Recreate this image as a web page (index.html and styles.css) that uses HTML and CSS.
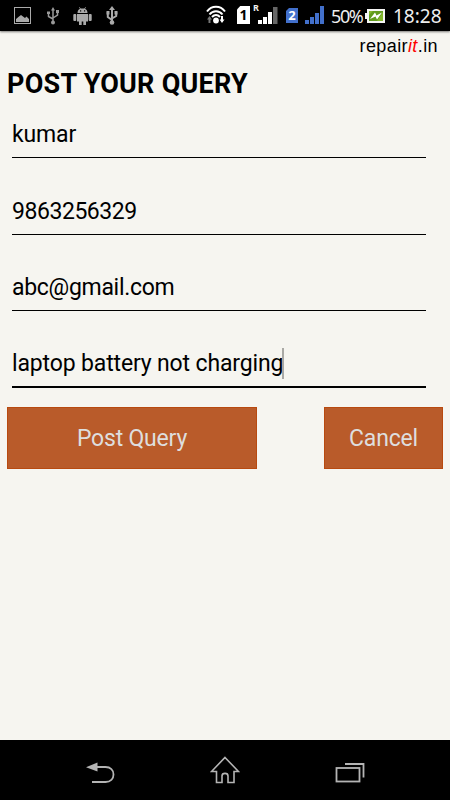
FILE: index.html
```html
<!DOCTYPE html>
<html lang="en">
  <head>
    <meta charset="UTF-8" />
    <meta name="viewport" content="width=device-width, initial-scale=1.0" />
    <title>Post Your Query</title>
    <link rel="stylesheet" href="styles.css">
  </head>
  <body>
    <div class="status-bar">
      <div class="status-left">
        <svg class="icon-image" width="18" height="18" viewBox="0 0 18 18">
          <rect x="0.5" y="0.5" width="16" height="16" fill="none" stroke="#aaa" />
          <path d="M2 15V12L5 9.5L7 8L9 9.5L11 11L12.5 9.5L15 12V15Z" fill="#aaa" />
        </svg>
        <svg class="icon-usb" width="12" height="18" viewBox="0 0 12 18">
          <path d="M6 2V16M6 12L1.5 9.5V5M6 11L10.5 8V4" fill="none" stroke="#999" stroke-width="1.5" />
          <path d="M6 0L8 3.5H4ZM0 4.5H3V7H0ZM9 3H12V6H9Z" fill="#999" />
          <circle cx="6" cy="15.5" r="2" fill="#999" />
        </svg>
        <svg class="icon-android" width="19" height="18" viewBox="0 0 19 18">
          <path d="M4.5 6C4.5 3.5 6 2 7 1.7L6 0.3L6.5 0L7.6 1.4H11.4L12.5 0L13 0.3L12 1.7C13.5 2.5 14.5 3.8 14.5 6Z" fill="#aaa" />
          <path d="M4 7H15V14.5H13V18H10.3V14.5H8.7V18H6V14.5H4Z" fill="#aaa" />
          <rect x="0.3" y="7" width="3" height="7" rx="1" fill="#aaa" />
          <rect x="15.7" y="7" width="3" height="7" rx="1" fill="#aaa" />
          <rect x="7" y="3.3" width="1.2" height="1.2" />
          <rect x="11" y="3.3" width="1.2" height="1.2" />
        </svg>
        <svg class="icon-usb-bold" width="12" height="19" viewBox="0 0 12 19">
          <path d="M6 2V17M6 14L1.8 11V6M6 12.5L10.2 10V6" fill="none" stroke="#aaa" stroke-width="2" />
          <path d="M6 0L9 4H3ZM0.5 5H3.5V8.5H0.5ZM8.5 5H11.5V8.5H8.5Z" fill="#aaa" />
          <circle cx="6" cy="16.5" r="2.3" fill="#aaa" />
        </svg>
      </div>
      <div class="status-right">
        <svg class="icon-wifi" width="20" height="20" viewBox="0 0 20 20">
          <path d="M1 6.5C5.5 0 14.5 0 19 6.5M3.5 9.5C7 5 13 5 16.5 9.5M6 12C8.5 9.3 11.5 9.3 14 12" fill="none" stroke="#fff" stroke-width="2" />
          <circle cx="10" cy="15.5" r="2.9" fill="#fff" />
          <path d="M3.5 11L6 14.5H4.5V18H2.5V14.5H1Z" fill="#777" />
          <path d="M16 18L13.5 14.5H15V11H17V14.5H18.5Z" fill="#fff" />
        </svg>
        <span class="sim">1</span>
        <span class="roaming">R</span>
        <svg class="icon-signal" width="20" height="17" viewBox="0 0 20 17">
          <path d="M0 13H4V17H0ZM5 10H9V17H5ZM10 5H14V17H10Z" fill="#fff" />
          <path d="M15 0H19.5V17H15Z" fill="#666" />
        </svg>
        <span class="sim sim-blue">2</span>
        <svg class="icon-signal-blue" width="20" height="18" viewBox="0 0 20 18">
          <path d="M0 14H4V18H0ZM5 11H9V18H5ZM10 7H14V18H10ZM15 0H19V18H15Z" fill="#4270cc" />
        </svg>
        <span class="percent">50%</span>
        <svg class="icon-battery" width="20" height="14" viewBox="0 0 20 14">
          <path d="M2 0H20V14H2V10H0V4H2Z" fill="#f5f5f5" />
          <rect x="4" y="2" width="14" height="10" fill="#83b72b" />
          <path d="M4 12V6L8 2H18V3L12 12Z" fill="#619b1d" />
          <path d="M5 10L10 3.5L11.5 6.5L17 3.5L12 10.5L10.5 7.5Z" fill="#fff" />
        </svg>
        <span class="clock">18:28</span>
      </div>
    </div>

    <div class="content">
      <div class="logo">repair<span class="logo-it">it</span>.in</div>
      <h1>POST YOUR QUERY</h1>
      <form class="query-form">
        <div class="field"><input type="text" value="kumar" /></div>
        <div class="field"><input type="tel" value="9863256329" /></div>
        <div class="field"><input type="email" value="abc@gmail.com" /></div>
        <div class="field active">
          <input type="text" value="laptop battery not charging" />
          <span class="caret"></span>
        </div>
        <div class="buttons">
          <button type="button" class="btn btn-post">Post Query</button>
          <button type="button" class="btn btn-cancel">Cancel</button>
        </div>
      </form>
    </div>

    <div class="nav-bar">
      <svg width="30" height="24" viewBox="0 0 30 24">
        <path d="M10 6H20.5C25.5 6 28.5 9 28.5 13.5S25.5 21 20.5 21H7" fill="none" stroke="#b4b4b4" stroke-width="1.8" />
        <path d="M1 6.2L12.5 1.5V10.5Z" fill="#b4b4b4" />
      </svg>
      <svg class="icon-home" width="30" height="28" viewBox="0 0 30 28">
        <path d="M15 1.5L28.5 15.5H24V26.5H18V20C18 16.5 12 16.5 12 20V26.5H6.5V15.5H1.5Z" fill="none" stroke="#b4b4b4" stroke-width="1.6" />
      </svg>
      <svg class="icon-recent" width="30" height="22" viewBox="0 0 30 22">
        <rect x="1.5" y="6" width="23" height="13.5" fill="none" stroke="#b4b4b4" stroke-width="1.8" />
        <path d="M10 2H28.5V15.5" fill="none" stroke="#b4b4b4" stroke-width="1.8" />
      </svg>
    </div>
  </body>
</html>
```
FILE: styles.css
```css
* {
  box-sizing: border-box;
}
body {
  margin: 0;
  height: 800px;
  display: flex;
  flex-direction: column;
  background: #f6f5f0;
  color: #000;
  font-family: Roboto, sans-serif;
}
.status-bar {
  display: flex;
  justify-content: space-between;
  height: 31px;
  background: #000;
  box-shadow: 0 1px 2px rgba(0, 0, 0, 0.5);
  color: #eee;
  font-family: "Noto Sans", sans-serif;
}
.status-left,
.status-right {
  display: flex;
  align-items: flex-start;
}
.status-left {
  padding-left: 14px;
}
.status-right {
  padding-right: 7px;
}
.icon-image,
.icon-usb,
.icon-android {
  margin-top: 7px;
}
.icon-usb {
  margin-left: 15px;
}
.icon-android {
  margin-left: 14px;
}
.icon-usb-bold {
  margin: 6px 0 0 14px;
}
.icon-wifi {
  margin: 5px 11px 0 0;
}
.sim {
  width: 13px;
  height: 18px;
  margin: 6px 3px 0 0;
  background: #fff;
  clip-path: polygon(25% 0, 100% 0, 100% 100%, 0 100%, 0 20%);
  color: #000;
  font-size: 14px;
  font-weight: bold;
  line-height: 18px;
  text-align: center;
}
.sim-blue {
  width: 12px;
  height: 15px;
  margin: 8px 7px 0 0;
  background: #4270cc;
  color: #fff;
  font-size: 13px;
  line-height: 15px;
}
.roaming {
  width: 5px;
  margin-top: 1px;
  font-size: 9px;
  font-weight: bold;
  line-height: 13px;
}
.icon-signal {
  margin: 7px 8px 0 0;
}
.icon-signal-blue {
  margin: 6px 6px 0 0;
}
.percent {
  width: 34px;
  font-size: 18px;
  letter-spacing: -1.4px;
  line-height: 33px;
}
.icon-battery {
  margin: 9px 8px 0 0;
}
.clock {
  width: 50px;
  font-size: 19px;
  line-height: 32px;
}
.content {
  flex: 1;
}
.logo {
  height: 31px;
  padding: 5px 12px 0 0;
  font-family: "Liberation Sans", Arial, sans-serif;
  font-size: 18px;
  letter-spacing: 0.4px;
  line-height: 21px;
  text-align: right;
}
.logo-it {
  color: #f00;
  font-style: italic;
}
h1 {
  margin: 0;
  padding: 7px 7px 0;
  font-size: 27px;
  line-height: 30px;
  letter-spacing: 0.25px;
}
.query-form {
  padding: 0 7px;
}
.field {
  position: relative;
  height: 76.6px;
  margin: 0 17px 0 5px;
  padding-top: 18px;
}
.field:first-child {
  height: 59px;
  padding-top: 0;
}
.field input {
  display: block;
  width: 100%;
  height: 58.6px;
  padding: 13px 0 0;
  border: 0;
  border-bottom: 1px solid #000;
  background: none;
  color: #000;
  font-family: inherit;
  font-size: 23px;
  letter-spacing: -0.15px;
  outline: none;
}
.field input[type="tel"] {
  letter-spacing: -0.45px;
}
.field input[type="email"] {
  letter-spacing: -0.3px;
}
.field.active input {
  border-bottom-width: 2px;
}
.caret {
  position: absolute;
  top: 37px;
  left: 270px;
  width: 2px;
  height: 31px;
  background: #aaa9a5;
}
.buttons {
  display: flex;
  justify-content: space-between;
  margin-top: 19px;
}
.btn {
  height: 62px;
  padding: 2px 0 0;
  border: 1px solid #b84a10;
  background: #b95b2a;
  color: #dedede;
  font-family: inherit;
  font-size: 23px;
  letter-spacing: -0.2px;
}
.btn-post {
  width: 250px;
}
.btn-cancel {
  width: 119px;
}
.nav-bar {
  display: flex;
  justify-content: center;
  align-items: center;
  gap: 95px;
  height: 60px;
  padding-top: 6px;
  background: #000;
}
.icon-home {
  margin-bottom: 6px;
}
```
